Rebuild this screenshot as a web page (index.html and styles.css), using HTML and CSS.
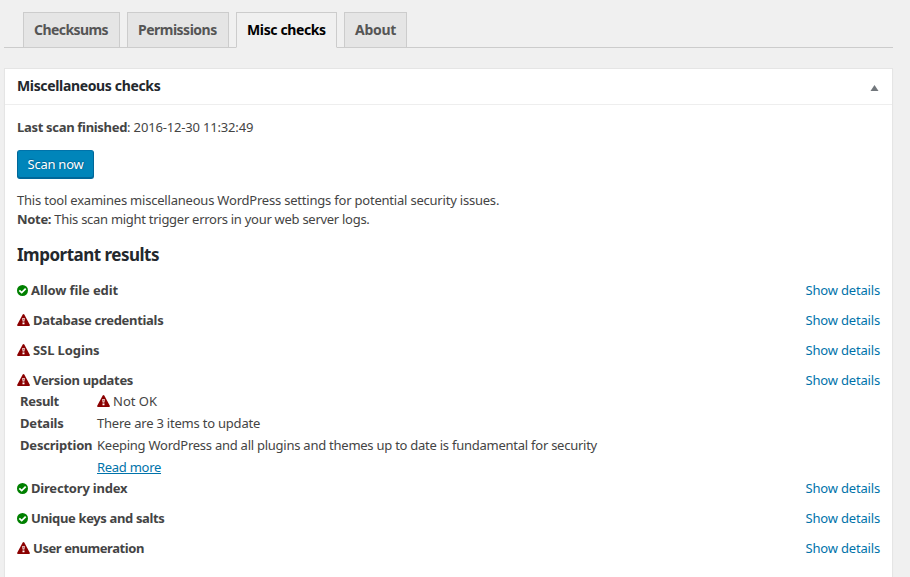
FILE: index.html
```html
<!DOCTYPE html>
<html lang="en">
<head>
<meta charset="utf-8">
<title>Misc checks</title>
<link rel="stylesheet" href="styles.css">
</head>
<body>
<svg class="defs" aria-hidden="true">
  <symbol id="ok" viewBox="0 0 11 11">
    <circle cx="5.5" cy="5.5" r="5.5" fill="green"/>
    <path d="M2.3 5.3 4.7 7.6 8.7 3.6" fill="none" stroke="#fff" stroke-width="1.8"/>
  </symbol>
  <symbol id="warn" viewBox="0 0 13 12">
    <path d="M5.7.6Q6.5-.5 7.3.6L12.8 10.8Q13.1 12 12 12H1Q-.1 12 .2 10.8Z" fill="#8b0000"/>
    <path d="M5.3 4h2.4l-.3 3.4H5.6ZM5.5 8.4h2v1.8h-2Z" fill="#fff"/>
    <path d="M6.2 4.6h.6v2h-.6Z" fill="#8b0000"/>
  </symbol>
</svg>
<div class="wrap">
  <nav class="tabs">
    <a class="tab checksums">Checksums</a>
    <a class="tab permissions">Permissions</a>
    <a class="tab misc active">Misc checks</a>
    <a class="tab about">About</a>
  </nav>
  <section class="panel">
    <header class="panel-head">
      <h2>Miscellaneous checks</h2>
      <svg class="toggle" viewBox="0 0 8 6"><path d="M4 0 8 6H0Z" fill="#72777c"/></svg>
    </header>
    <div class="inside">
      <p class="last"><b>Last scan finished</b>: 2016-12-30 11:32:49</p>
      <button class="button">Scan now</button>
      <p class="intro">This tool examines miscellaneous WordPress settings for potential security issues.<br><span class="note"><b>Note:</b> This scan might trigger errors in your web server logs.</span></p>
      <h3>Important results</h3>
      <div class="row"><svg class="ok"><use href="#ok"/></svg><b class="allow">Allow file edit</b><a>Show details</a></div>
      <div class="row"><svg class="warn"><use href="#warn"/></svg><b>Database credentials</b><a>Show details</a></div>
      <div class="row"><svg class="warn"><use href="#warn"/></svg><b class="ssl">SSL Logins</b><a>Show details</a></div>
      <div class="row open"><svg class="warn"><use href="#warn"/></svg><b>Version updates</b><a>Show details</a></div>
      <dl class="details">
        <dt>Result</dt><dd class="status"><svg class="warn"><use href="#warn"/></svg>Not OK</dd>
        <dt class="tight">Details</dt><dd>There are 3 items to update</dd>
        <dt class="tight">Description</dt><dd class="desc">Keeping WordPress and all plugins and themes up to date is fundamental for security</dd>
        <dd class="more"><a>Read more</a></dd>
      </dl>
      <div class="row"><svg class="ok"><use href="#ok"/></svg><b class="index">Directory index</b><a>Show details</a></div>
      <div class="row"><svg class="ok"><use href="#ok"/></svg><b class="keys">Unique keys and salts</b><a>Show details</a></div>
      <div class="row"><svg class="warn"><use href="#warn"/></svg><b class="users">User enumeration</b><a>Show details</a></div>
    </div>
  </section>
</div>
</body>
</html>
```
FILE: styles.css
```css
* { box-sizing: border-box; }
html, body { height: 100%; }
body {
  margin: 0;
  background: #f0f0f0;
  color: #444;
  font: 13px/19px "Noto Sans", "Open Sans", sans-serif;
  letter-spacing: -.21px;
  overflow: hidden;
}
b, dt { font-weight: 700; letter-spacing: -.31px; }
p, h2, h3, dl, dd { margin: 0; }
.defs { position: absolute; width: 0; height: 0; }
.wrap {
  display: flex;
  flex-direction: column;
  height: 100%;
  width: 889px;
  margin-left: 4px;
  padding-top: 12px;
}
.tabs {
  display: flex;
  flex: none;
  gap: 7px;
  height: 36px;
  padding-left: 19px;
  border-bottom: 1px solid #ccc;
}
.tab {
  height: 36px;
  padding: 5px 10px;
  border: 1px solid #ccc;
  background: #e5e5e5;
  color: #555;
  font-size: 14px;
  font-weight: 700;
  line-height: 24px;
  white-space: nowrap;
}
.checksums { width: 97px; letter-spacing: -.57px; }
.permissions { width: 102px; letter-spacing: -.51px; }
.misc { width: 101px; letter-spacing: -.38px; }
.about { width: 63px; letter-spacing: -.29px; }
.tab.active {
  border-bottom-color: #f0f0f0;
  background: #f0f0f0;
  color: #000;
}
.panel {
  flex: 1;
  margin-top: 20px;
  border: 1px solid #e5e5e5;
  border-bottom: 0;
  background: #fff;
  box-shadow: 0 1px 1px rgba(0, 0, 0, .04);
}
.panel-head {
  display: flex;
  align-items: center;
  justify-content: space-between;
  height: 36px;
  padding: 0 13px 2px 12px;
  border-bottom: 1px solid #eee;
}
h2 {
  color: #23282d;
  font-size: 14px;
  line-height: 20px;
  letter-spacing: -.35px;
}
.toggle { width: 9px; height: 6px; margin-top: 4px; }
.inside { padding: 13px 12px 0; }
.last { letter-spacing: -.17px; }
.button {
  display: block;
  width: 77px;
  height: 29px;
  margin: 13px 0 12px;
  padding: 0;
  border: 1px solid;
  border-color: #0073aa #006799 #006799;
  border-radius: 3px;
  background: #0085ba;
  box-shadow: inset 0 -1px 0 #006799;
  color: #fff;
  font: inherit;
  letter-spacing: -.24px;
  text-shadow: 0 -1px 1px #006799, 1px 0 1px #006799;
}
.note { letter-spacing: -.28px; }
h3 {
  margin: 14px 0;
  color: #23282d;
  font-size: 17px;
  line-height: 24px;
  letter-spacing: -.5px;
}
.row {
  display: flex;
  align-items: center;
  height: 30px;
  padding-bottom: 11px;
}
.row a { margin-left: auto; letter-spacing: -.18px; }
a { color: #0073aa; }
.ok { flex: none; width: 11px; height: 11px; margin-right: 3px; }
.warn { flex: none; width: 13px; height: 12px; margin-right: 3px; }
.row .warn { margin-bottom: 2px; }
.allow, .ssl { letter-spacing: -.1px; }
.index { letter-spacing: -.2px; }
.keys { letter-spacing: -.36px; }
.users { letter-spacing: -.43px; }
.row.open { height: 19px; padding-bottom: 0; }
.details {
  display: grid;
  grid-template-columns: 77px 1fr;
  grid-auto-rows: 22px;
  line-height: 22px;
  margin-bottom: 1px;
  padding-left: 3px;
}
.tight { letter-spacing: -.2px; }
.desc { letter-spacing: -.25px; }
.status { display: flex; align-items: center; letter-spacing: 0; }
.status .warn { margin-bottom: 1px; }
.more { grid-column: 2; letter-spacing: -.28px; }
.more a { text-decoration: underline; }
```
